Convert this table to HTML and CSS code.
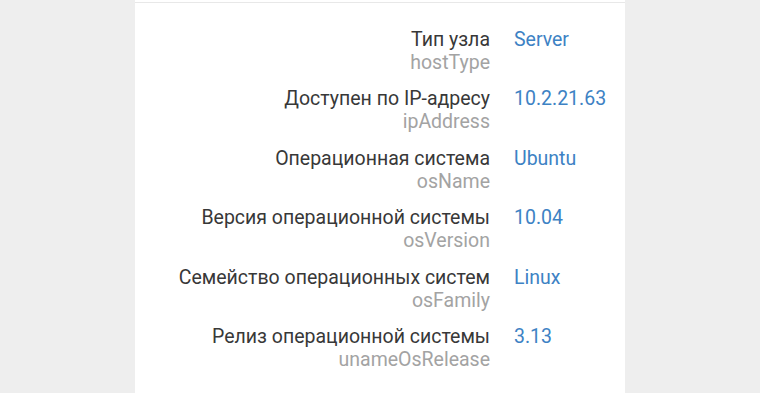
FILE: index.html
```html
<!DOCTYPE html>
<html>
	<head>
		<meta charset="utf-8">
		<title>Свойства узла</title>
		<link rel="stylesheet" href="styles.css">
	</head>
	<body>
		<div class="card">
			<dl class="props">
				<div class="row">
					<dt><span class="name">Тип узла</span><span class="key">hostType</span></dt>
					<dd>Server</dd>
				</div>
				<div class="row">
					<dt><span class="name">Доступен по IP-адресу</span><span class="key">ipAddress</span></dt>
					<dd>10.2.21.63</dd>
				</div>
				<div class="row">
					<dt><span class="name">Операционная система</span><span class="key">osName</span></dt>
					<dd>Ubuntu</dd>
				</div>
				<div class="row">
					<dt><span class="name">Версия операционной системы</span><span class="key">osVersion</span></dt>
					<dd>10.04</dd>
				</div>
				<div class="row">
					<dt><span class="name">Семейство операционных систем</span><span class="key">osFamily</span></dt>
					<dd>Linux</dd>
				</div>
				<div class="row">
					<dt><span class="name">Релиз операционной системы</span><span class="key">unameOsRelease</span></dt>
					<dd>3.13</dd>
				</div>
			</dl>
		</div>
	</body>
</html>
```

FILE: styles.css
```css
/* сброс отступов */
*{
	margin: 0;
	padding: 0;
}
body{
	background-color: #eeeeee;
	font-family: Roboto, "Noto Sans", sans-serif;
	font-size: 19.5px;
}
.card{
	width: 490px;
	margin: 0 auto;
	padding-top: 2px;
	background-color: #ffffff;
	height: 391px;
}
.props{
	border-top: 1px solid #e8e8e8;
	padding-top: 24.5px;
}
.row{
	display: grid;
	grid-template-columns: 355px 1fr;
	column-gap: 24px;
	margin-bottom: 13.6px;
}
.row dt{
	display: flex;
	flex-direction: column;
	align-items: flex-end;
	text-align: right;
}
.name{
	color: #383838;
	line-height: 23px;
}
.key{
	color: #a3a3a3;
	line-height: 23px;
}
.row dd{
	color: #3d82c4;
	line-height: 23px;
}
```
